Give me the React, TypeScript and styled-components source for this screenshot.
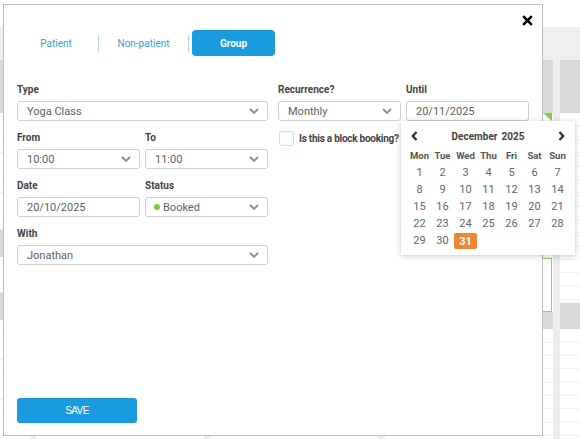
import React from 'react';
import styled, { createGlobalStyle } from 'styled-components';

const GlobalStyle = createGlobalStyle`
  html, body { margin: 0; padding: 0; background: #fff; }
  body { font-family: Roboto, "Noto Sans", Arial, sans-serif; }
  * { box-sizing: border-box; }
`;

const Page = styled.div`
  position: relative;
  width: 580px;
  height: 439px;
  overflow: hidden;
`;

/* ---------- background calendar ---------- */
const Backdrop = styled.div`
  display: flex;
  flex-direction: column;
  height: 100%;
`;
const TopBand = styled.div`
  height: 27px;
  flex: none;
`;
const HeaderBand = styled.div`
  height: 33px;
  flex: none;
  background: #efefef;
`;
const Columns = styled.div`
  flex: 1;
  display: flex;
  min-height: 0;
`;
const Column = styled.div<{ $w?: number }>`
  ${(p) => (p.$w ? `width:${p.$w}px; flex:none;` : 'flex:1;')}
  display: flex;
  flex-direction: column;
  overflow: hidden;
`;
const Gutter = styled.div<{ $w: number }>`
  width: ${(p) => p.$w}px;
  flex: none;
  background: #ececec;
`;
type SlotKind = 'gray' | 'line' | 'event' | 'flag';
const Slot = styled.div<{ $h: number; $kind: SlotKind }>`
  height: ${(p) => p.$h}px;
  flex: none;
  position: relative;
  background: ${(p) => (p.$kind === 'gray' ? '#d9d9d9' : '#fff')};
  border-bottom: ${(p) => (p.$kind === 'gray' ? 'none' : '1px solid #f0f0f0')};
  ${(p) =>
    p.$kind === 'event'
      ? `border: 1px solid #8fd46b; margin-right: 1px;`
      : ''}
  ${(p) =>
    p.$kind === 'flag'
      ? `&::after{content:''; position:absolute; right:1px; top:0; border-style:solid; border-width:0 9px 8px 0; border-color:transparent #7fcf4a transparent transparent;}`
      : ''}
`;

type SlotDef = [SlotKind, number];
const lines = (total: number): SlotDef[] => {
  const out: SlotDef[] = [];
  let acc = 0;
  while (acc < total - 0.5) {
    const h = Math.min(40 / 3, total - acc);
    out.push(['line', h]);
    acc += h;
  }
  return out;
};

const timeSlots: SlotDef[] = [['gray', 53], ...lines(117), ['gray', 27], ...lines(36), ['gray', 27], ...lines(130)];
const daySlots: SlotDef[] = [['gray', 53], ...lines(330)];
const eventSlots: SlotDef[] = [['gray', 53], ['flag', 40 / 3], ...lines(132), ['event', 54], ['gray', 17], ...lines(120)];
const lastSlots: SlotDef[] = [['gray', 53], ...lines(190), ['gray', 26], ...lines(120)];

const renderSlots = (s: SlotDef[]) => s.map(([k, h], i) => <Slot key={i} $kind={k} $h={h} />);

/* ---------- modal ---------- */
const Modal = styled.div`
  position: absolute;
  left: 3px;
  top: 4px;
  width: 540px;
  height: 432px;
  background: #fff;
  border: 1px solid #bdbdbd;
  display: flex;
  flex-direction: column;
  padding: 25px 13px 12px 13px;
`;
const CloseButton = styled.button`
  position: absolute;
  right: 9px;
  top: 10px;
  width: 11px;
  height: 11px;
  padding: 0;
  border: none;
  background: none;
  display: flex;
`;
const Tabs = styled.div`
  display: flex;
  align-items: center;
  height: 26px;
  margin-left: -3px;
`;
const Tab = styled.div<{ $w: number }>`
  width: ${(p) => p.$w}px;
  text-align: center;
  font-size: 10px;
  color: #3b9ad8;
`;
const TabSep = styled.div`
  width: 1px;
  height: 17px;
  background: #b3dbf3;
`;
const ActiveTab = styled.div`
  width: 83px;
  height: 26px;
  margin-left: 3px;
  background: #1a9be0;
  border-radius: 4px;
  color: #fff;
  font-weight: 700;
  font-size: 10px;
  display: flex;
  align-items: center;
  justify-content: center;
`;

const Form = styled.div`
  margin-top: 27px;
  display: grid;
  grid-template-columns: 251px 251px;
  column-gap: 10px;
  align-items: start;
`;
const Col = styled.div`
  display: flex;
  flex-direction: column;
`;
const Pair = styled.div`
  display: grid;
  grid-template-columns: 123px 123px;
  column-gap: 5px;
`;
const Group = styled.div`
  margin-bottom: 10px;
`;
const Label = styled.div`
  font-size: 10px;
  line-height: 13px;
  height: 13px;
  font-weight: 700;
  color: #444;
  margin-bottom: 5px;
`;
const Control = styled.div<{ $pl?: number }>`
  position: relative;
  height: 20px;
  border: 1px solid #cfcfcf;
  border-radius: 3px;
  display: flex;
  align-items: center;
  padding: 0 8px 0 ${(p) => p.$pl ?? 9}px;
  font-size: 11px;
  color: #5f5f5f;
`;
const Value = styled.span`
  flex: 1;
  display: flex;
  align-items: center;
`;
const Dot = styled.span`
  width: 6px;
  height: 6px;
  border-radius: 50%;
  background: #7bcb3f;
  margin-right: 3px;
`;
const CheckRow = styled.div`
  display: flex;
  align-items: center;
  padding-left: 1px;
`;
const Box = styled.span`
  width: 15px;
  height: 15px;
  border: 1px solid #c3e2f6;
  border-radius: 3px;
  margin-right: 5px;
  flex: none;
`;
const CheckText = styled.span`
  font-size: 10px;
  font-weight: 700;
  color: #444;
  letter-spacing: -0.25px;
  white-space: nowrap;
`;

const SaveButton = styled.button`
  margin-top: auto;
  width: 120px;
  height: 25px;
  border: none;
  border-radius: 3px;
  background: #1a9be0;
  color: #fff;
  font-family: "Liberation Sans", Arial, sans-serif;
  font-size: 10px;
  letter-spacing: -0.6px;
  padding: 0;
`;

/* ---------- date picker ---------- */
const Picker = styled.div`
  position: absolute;
  left: -6px;
  top: 19px;
  width: 174px;
  height: 134px;
  background: #fff;
  box-shadow: 0 1px 6px rgba(0, 0, 0, 0.22);
  z-index: 2;
  color: #444;
`;
const PickerHead = styled.div`
  display: flex;
  align-items: center;
  justify-content: space-between;
  height: 26px;
  padding: 4px 10px 0 10px;
`;
const Title = styled.div`
  font-size: 10px;
  font-weight: 700;
  color: #444;
  display: flex;
  gap: 4px;
`;
const DayGrid = styled.div`
  display: grid;
  grid-template-columns: repeat(7, 23px);
  grid-auto-rows: 17px;
  padding: 0 6px 0 7px;
`;
const WeekDay = styled.div`
  display: flex;
  align-items: center;
  justify-content: center;
  font-size: 9.5px;
  font-weight: 700;
  color: #555;
`;
const Day = styled.div<{ $active?: boolean }>`
  display: flex;
  align-items: center;
  justify-content: center;
  font-size: 11px;
  color: ${(p) => (p.$active ? '#fff' : '#666')};
  font-weight: ${(p) => (p.$active ? 700 : 400)};
  background: ${(p) => (p.$active ? '#f08532' : 'transparent')};
  border-radius: 2px;
  height: ${(p) => (p.$active ? '16px' : 'auto')};
  align-self: ${(p) => (p.$active ? 'end' : 'stretch')};
`;

const Chevron = () => (
  <svg width="10" height="6" viewBox="0 0 10 6">
    <path d="M1 1 L5 5 L9 1" fill="none" stroke="#8c8c8c" strokeWidth="1.8" />
  </svg>
);
const Arrow = ({ dir }: { dir: 'l' | 'r' }) => (
  <svg width="7" height="10" viewBox="0 0 7 10">
    <path
      d={dir === 'l' ? 'M5.5 1 L1.8 5 L5.5 9' : 'M1.5 1 L5.2 5 L1.5 9'}
      fill="none"
      stroke="#333"
      strokeWidth="2.3"
    />
  </svg>
);

const weekdays = ['Mon', 'Tue', 'Wed', 'Thu', 'Fri', 'Sat', 'Sun'];
const days = Array.from({ length: 31 }, (_, i) => i + 1);

const Select = ({ value, children }: { value?: string; children?: React.ReactNode }) => (
  <Control>
    <Value>{children ?? value}</Value>
    <Chevron />
  </Control>
);

export default function App() {
  return (
    <Page>
      <GlobalStyle />
      <Backdrop>
        <TopBand />
        <HeaderBand />
        <Columns>
          <Column $w={30}>{renderSlots(timeSlots)}</Column>
          <Gutter $w={6} />
          <Column $w={168}>{renderSlots(daySlots)}</Column>
          <Gutter $w={7} />
          <Column $w={167}>{renderSlots(daySlots)}</Column>
          <Gutter $w={7} />
          <Column $w={168}>{renderSlots(eventSlots)}</Column>
          <Gutter $w={7} />
          <Column>{renderSlots(lastSlots)}</Column>
        </Columns>
      </Backdrop>

      <Modal>
        <CloseButton aria-label="Close">
          <svg width="11" height="11" viewBox="0 0 11 11">
            <path d="M1.2 1.2 L9.8 9.8 M9.8 1.2 L1.2 9.8" stroke="#000" strokeWidth="2.6" />
          </svg>
        </CloseButton>

        <Tabs>
          <Tab $w={84}>Patient</Tab>
          <TabSep />
          <Tab $w={89}>Non-patient</Tab>
          <TabSep />
          <ActiveTab>Group</ActiveTab>
        </Tabs>

        <Form>
          <Col>
            <Group>
              <Label>Type</Label>
              <Select value="Yoga Class" />
            </Group>
            <Pair>
              <Group>
                <Label>From</Label>
                <Select value="10:00" />
              </Group>
              <Group>
                <Label>To</Label>
                <Select value="11:00" />
              </Group>
            </Pair>
            <Pair>
              <Group>
                <Label>Date</Label>
                <Control>
                  <Value>20/10/2025</Value>
                </Control>
              </Group>
              <Group>
                <Label>Status</Label>
                <Control $pl={8}>
                  <Value>
                    <Dot />
                    Booked
                  </Value>
                  <Chevron />
                </Control>
              </Group>
            </Pair>
            <Group>
              <Label>With</Label>
              <Select value="Jonathan" />
            </Group>
          </Col>

          <Col>
            <Pair>
              <Group>
                <Label>Recurrence?</Label>
                <Select value="Monthly" />
              </Group>
              <Group>
                <Label>Until</Label>
                <Control>
                  <Value>20/11/2025</Value>
                  <Picker>
                    <PickerHead>
                      <Arrow dir="l" />
                      <Title>
                        <span>December</span>
                        <span>2025</span>
                      </Title>
                      <Arrow dir="r" />
                    </PickerHead>
                    <DayGrid>
                      {weekdays.map((w) => (
                        <WeekDay key={w}>{w}</WeekDay>
                      ))}
                      {days.map((d) => (
                        <Day key={d} $active={d === 31}>
                          {d}
                        </Day>
                      ))}
                    </DayGrid>
                  </Picker>
                </Control>
              </Group>
            </Pair>
            <CheckRow>
              <Box />
              <CheckText>Is this a block booking?</CheckText>
            </CheckRow>
          </Col>
        </Form>

        <SaveButton>SAVE</SaveButton>
      </Modal>
    </Page>
  );
}
